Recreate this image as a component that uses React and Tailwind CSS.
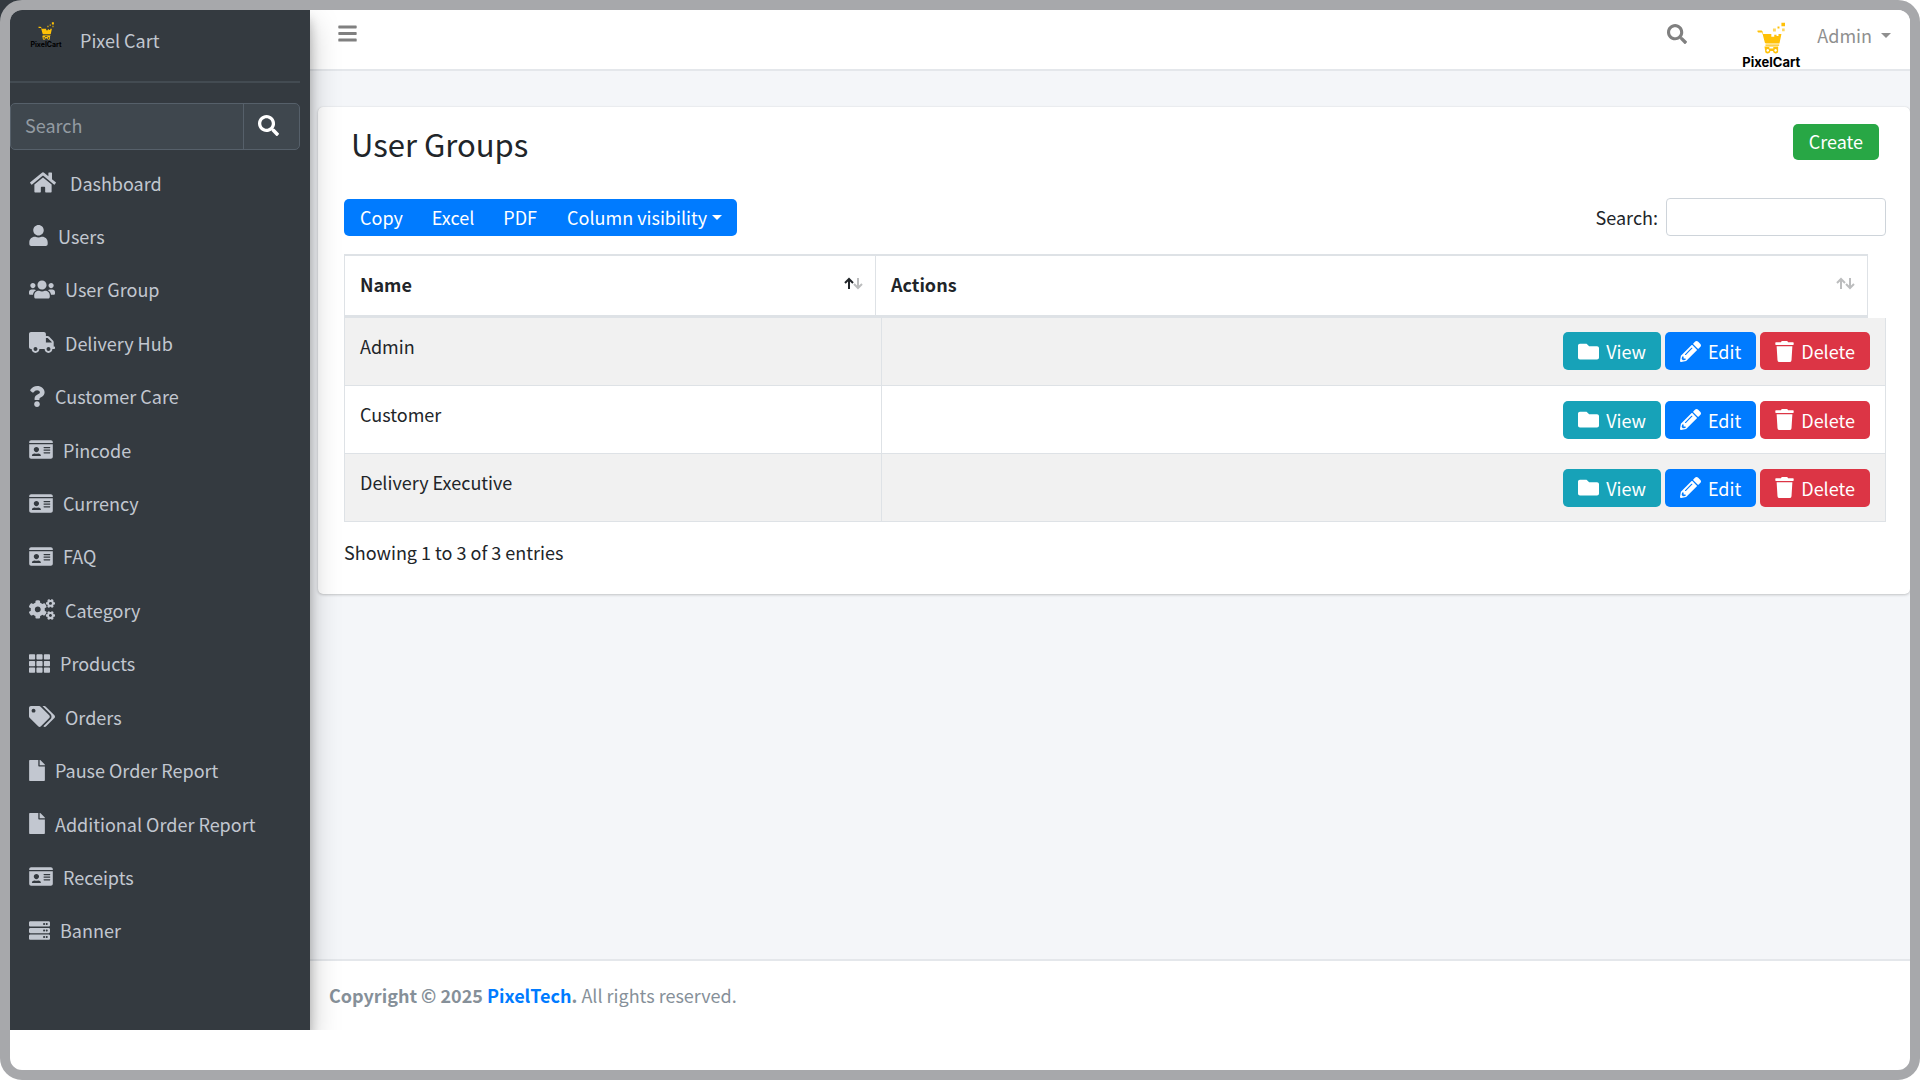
import React from "react";
import {
  FaBars,
  FaCogs,
  FaFile,
  FaFolder,
  FaHome,
  FaIdCard,
  FaPencilAlt,
  FaQuestion,
  FaSearch,
  FaServer,
  FaTags,
  FaTh,
  FaTrash,
  FaTruck,
  FaUser,
  FaUsers,
} from "react-icons/fa";

const menu = [
  { label: "Users", icon: FaUser, size: "w-[19px]" },
  { label: "User Group", icon: FaUsers, size: "w-[26px]" },
  { label: "Delivery Hub", icon: FaTruck, size: "w-[26px]" },
  { label: "Customer Care", icon: FaQuestion, size: "w-4" },
  { label: "Pincode", icon: FaIdCard, size: "w-6" },
  { label: "Currency", icon: FaIdCard, size: "w-6" },
  { label: "FAQ", icon: FaIdCard, size: "w-6" },
  { label: "Category", icon: FaCogs, size: "w-[26px]" },
  { label: "Products", icon: FaTh, size: "w-[21px]" },
  { label: "Orders", icon: FaTags, size: "w-[26px]" },
  { label: "Pause Order Report", icon: FaFile, size: "w-4" },
  { label: "Additional Order Report", icon: FaFile, size: "w-4" },
  { label: "Receipts", icon: FaIdCard, size: "w-6" },
  { label: "Banner", icon: FaServer, size: "w-[21px]" },
];

const groups = ["Admin", "Customer", "Delivery Executive"];

const CartMark = ({ className }) => (
  <svg viewBox="108 34 86 98" className={className} aria-hidden="true">
    <g fill="#ffc107">
      <path d="M110 60h11q3 0 4 3l2 8h25v8h9v-6h7v4h6v-6h9l-6 29h-41q-3 0-4-3l-8-31h-12q-4-3-2-6z" />
      <path d="M134 103h42v4h-42z" />
      <path
        fillRule="evenodd"
        d="M131 109h42v13a8 8 0 0 1-16 1h-8a8 8 0 0 1-16-1zM141 117a4 4 0 1 0 .1 0zM165 117a4 4 0 1 0 .1 0zM146 111v4h12v-4z"
      />
      <path d="M183 36h11v11h-11zM171 48h6v6h-6z" />
      <path d="M157 54h9v9h-9zM185 54h8v8h-8z" opacity=".65" />
    </g>
  </svg>
);

const Caret = () => (
  <span className="inline-block border-x-[5px] border-t-[5px] border-x-transparent border-t-current" />
);

const SortArrows = ({ active }) => (
  <svg viewBox="0 0 20 14" className="h-[14px] w-5" fill="none" strokeWidth="2">
    <path d="M5 12V2M1 6l4-4 4 4" stroke={active ? "#212529" : "#bcbdbe"} />
    <path d="M14 1v10M10 7l4 4 4-4" stroke="#bcbdbe" />
  </svg>
);

const Sidebar = () => (
  <aside className="relative z-10 flex w-[300px] shrink-0 flex-col bg-[#343a40] pr-[10px] text-[#c2c7d0] shadow-[0_14px_28px_rgba(0,0,0,0.25),0_10px_10px_rgba(0,0,0,0.22)]">
    <a
      href="#"
      className="flex h-[73px] items-start gap-4 border-b-2 border-[#434b52] pt-3 pl-[18px]"
    >
      <span className="flex w-9 flex-col items-center">
        <CartMark className="h-[18px] w-4" />
        <span className="font-[Inter] text-[7px] leading-[9px] font-bold text-black">
          PixelCart
        </span>
      </span>
      <span className="pt-1 leading-7">Pixel Cart</span>
    </a>

    <form className="mt-5 flex h-[47px] shrink-0 overflow-hidden rounded-[5px] border border-[#56606a] bg-[#3f474e]">
      <input
        type="text"
        aria-label="Search menu"
        placeholder="Search"
        className="min-w-0 flex-1 px-[14px] pb-[3px] placeholder:text-[#939ba2] focus:outline-none"
      />
      <button
        type="button"
        aria-label="Search"
        className="flex w-[56px] items-center border-l border-[#56606a] pb-[3px] pl-[14px] text-white"
      >
        <FaSearch className="size-[21px]" />
      </button>
    </form>

    <nav className="flex flex-1 flex-col justify-between pt-[7px] pb-[74px]">
      <a href="#" className="flex h-[51px] items-center gap-3 pl-[17px]">
        <span className="flex w-[31px] justify-center">
          <FaHome className="h-[23px] w-[26px]" />
        </span>
        Dashboard
      </a>
      {menu.map(({ label, icon: Icon, size }) => (
        <a
          key={label}
          href="#"
          className="flex h-[51px] items-center gap-[10px] pl-[19px]"
        >
          <Icon className={`h-[21px] shrink-0 ${size}`} />
          {label}
        </a>
      ))}
    </nav>
  </aside>
);

const Navbar = () => (
  <header className="flex h-[61px] items-start justify-between border-b-2 border-[#e4e7eb] bg-white pr-[19px] pl-[28px] text-[#808080]">
    <button type="button" aria-label="Toggle menu" className="pt-[13px]">
      <FaBars className="h-[21px] w-[19px]" />
    </button>
    <div className="flex items-start">
      <button type="button" aria-label="Search" className="mr-[54px] pt-[14px]">
        <FaSearch className="size-5" />
      </button>
      <span className="mr-4 flex w-[60px] flex-col items-center pt-3">
        <CartMark className="h-[32px] w-7" />
        <span className="font-[Inter] text-[13px] leading-4 font-bold text-black">
          PixelCart
        </span>
      </span>
      <button
        type="button"
        className="flex items-center gap-[9px] pt-[11px] leading-7 text-[#8f8f8f]"
      >
        Admin <Caret />
      </button>
    </div>
  </header>
);

const RowActions = () => (
  <div className="flex justify-end gap-1 text-white">
    <button
      type="button"
      className="flex h-[38px] items-center gap-[7px] rounded-[5px] bg-[#17a2b8] px-[15px]"
    >
      <FaFolder className="size-[21px]" /> View
    </button>
    <button
      type="button"
      className="flex h-[38px] items-center gap-[7px] rounded-[5px] bg-[#007bff] px-[15px]"
    >
      <FaPencilAlt className="size-[21px]" /> Edit
    </button>
    <button
      type="button"
      className="flex h-[38px] items-center gap-[7px] rounded-[5px] bg-[#dc3545] px-[15px]"
    >
      <FaTrash className="h-[21px] w-[19px]" /> Delete
    </button>
  </div>
);

const UserGroups = () => (
  <section className="ml-2 rounded-[5px] bg-white pr-6 pb-6 pl-[26px] shadow-[0_0_1px_rgba(0,0,0,0.13),0_1px_3px_rgba(0,0,0,0.2)]">
    <div className="flex items-start justify-between pt-[17px] pr-[7px] pl-[7px]">
      <h1 className="text-[31px] leading-10">User Groups</h1>
      <button
        type="button"
        className="h-9 rounded-[5px] bg-[#28a745] px-4 pb-[2px] text-white"
      >
        Create
      </button>
    </div>

    <div className="mt-[34px] flex items-center justify-between">
      <div className="flex h-[37px] overflow-hidden rounded-[5px] bg-[#007bff] text-white">
        <button type="button" className="pr-[15px] pl-4">
          Copy
        </button>
        <button type="button" className="px-[14px]">
          Excel
        </button>
        <button type="button" className="px-[15px]">
          PDF
        </button>
        <button type="button" className="flex items-center gap-[5px] px-[15px]">
          Column visibility <Caret />
        </button>
      </div>
      <label className="flex items-center gap-2">
        Search:
        <input
          type="search"
          className="h-[38px] w-[220px] rounded-[4px] border border-[#ced4da] px-2 focus:outline-none"
        />
      </label>
    </div>

    <div className="mt-[18px] pr-[18px]">
      <table className="w-full table-fixed border-collapse border border-t-2 border-[#dee2e6] text-left">
        <thead>
          <tr className="h-[61px] border-b-[3px] border-[#dee2e6]">
            <th className="w-[531px] border-r border-[#dee2e6] pr-[11px] pb-[2px] pl-[15px]">
              <div className="flex items-center justify-between">
                Name <SortArrows active />
              </div>
            </th>
            <th className="pr-[11px] pb-[2px] pl-[15px]">
              <div className="flex items-center justify-between">
                Actions <SortArrows />
              </div>
            </th>
          </tr>
        </thead>
      </table>
    </div>
    <table className="w-full table-fixed border-collapse border border-t-0 border-[#dee2e6]">
      <tbody>
        {groups.map((group) => (
          <tr
            key={group}
            className="h-[68px] border-b border-[#dee2e6] odd:bg-[#f1f1f1]"
          >
            <td className="w-[537px] border-r border-[#dee2e6] pt-4 pl-[15px] align-top">
              {group}
            </td>
            <td className="pr-[15px]">
              <RowActions />
            </td>
          </tr>
        ))}
      </tbody>
    </table>

    <p className="pt-4 pb-1 leading-7">Showing 1 to 3 of 3 entries</p>
  </section>
);

const App = () => {
  return (
    <div className="min-h-screen bg-[linear-gradient(135deg,#343a40_50px,#ffffff_50px)] font-['Noto_Sans_CJK_SC',sans-serif] text-[18px] leading-6 text-[#212529]">
      <div className="flex min-h-screen flex-col overflow-hidden rounded-[22px] border-[10px] border-[#a7a8ab] bg-white pb-10">
        <div className="flex flex-1 overflow-hidden">
          <Sidebar />
          <div className="flex min-w-0 flex-1 flex-col">
            <Navbar />
            <main className="flex-1 bg-[#f4f6f9] pt-9">
              <UserGroups />
            </main>
            <footer className="h-[71px] border-t-2 border-[#e4e7eb] bg-white pt-[22px] pl-[19px] leading-6 text-[#869099]">
              <strong>
                Copyright © 2025{" "}
                <a href="#" className="text-[#007bff]">
                  PixelTech
                </a>
                .
              </strong>{" "}
              All rights reserved.
            </footer>
          </div>
        </div>
      </div>
    </div>
  );
};

export default App;
